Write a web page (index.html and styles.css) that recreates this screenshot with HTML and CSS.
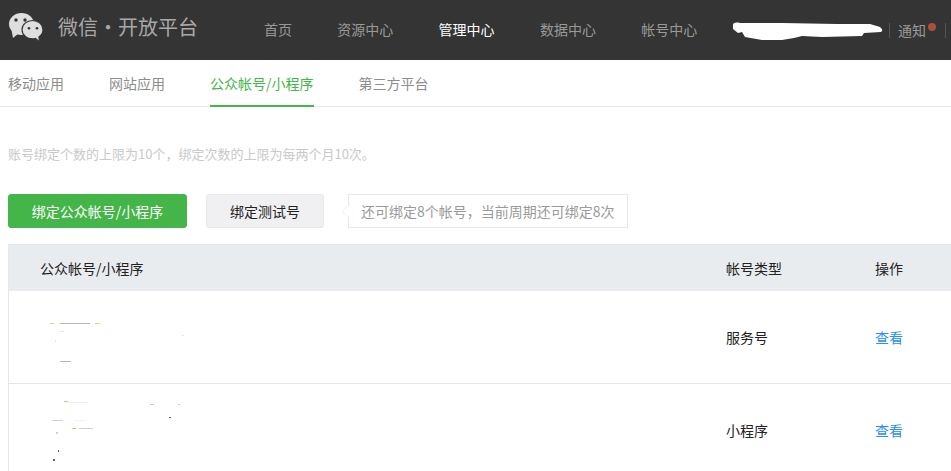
FILE: index.html
```html
<!DOCTYPE html>
<html lang="zh-CN">
<head>
<meta charset="utf-8">
<title>微信开放平台</title>
<link rel="stylesheet" href="styles.css">
</head>
<body>
<header class="topbar">
  <div class="brand">
    <svg class="logo" width="36" height="30" viewBox="0 0 36 30">
      <ellipse fill="#dedede" cx="13.500" cy="11" rx="12.500" ry="11"/>
      <path fill="#dedede" d="M3.500 17 5 25 11 20z"/>
      <path fill="#dedede" stroke="#343434" stroke-width="1.200" d="M24.500 7.500c-5.800 0-10.500 4-10.500 9.200s4.700 9.200 10.500 9.200c1.100 0 2.100-.2 3-.4l4 3.500-.6-5.100c2.500-1.700 4.100-4.300 4.100-7.200 0-5.200-4.700-9.200-10.500-9.200z"/>
      <circle fill="#343434" cx="8" cy="7" r="1.700"/><circle fill="#343434" cx="17" cy="7" r="1.700"/>
      <circle fill="#343434" cx="21" cy="15.300" r="1.300"/><circle fill="#343434" cx="29" cy="15.300" r="1.300"/>
    </svg>
    <span class="brand-name">微信<span class="brand-sep">·</span>开放平台</span>
  </div>
  <nav class="main-nav">
    <a class="nav-item">首页</a>
    <a class="nav-item">资源中心</a>
    <a class="nav-item nav-active">管理中心</a>
    <a class="nav-item">数据中心</a>
    <a class="nav-item">帐号中心</a>
  </nav>
  <div class="account">
    <svg class="scribble" width="152" height="21" viewBox="0 0 152 21">
      <path fill="#fff" d="M1 5C1 3 3 2 8 3L50 3 105 4 138 4 148 7Q152 10 149 12L132 13 130 16 90 17 70 16 62 18 50 20 30 20 13 17 10 12 6 13 1 9Z"/>
    </svg>
    <span class="notice">通知<i class="dot"></i></span>
  </div>
</header>

<nav class="tabs">
  <a class="tab">移动应用</a>
  <a class="tab">网站应用</a>
  <a class="tab tab-active">公众帐号/小程序</a>
  <a class="tab">第三方平台</a>
</nav>

<main class="content">
  <p class="limit">账号绑定个数的上限为10个，绑定次数的上限为每两个月10次。</p>
  <div class="actions">
    <a class="btn btn-primary">绑定公众帐号/小程序</a>
    <a class="btn btn-default">绑定测试号</a>
    <div class="tip">还可绑定8个帐号，当前周期还可绑定8次</div>
  </div>
  <div class="table">
    <div class="row row-head">
      <div class="col-name col-title">公众帐号/小程序</div>
      <div class="col-type">帐号类型</div>
      <div class="col-op">操作</div>
    </div>
    <div class="row row-body">
      <div class="col-name">
        <svg class="specks" width="200" height="92" viewBox="0 0 200 92">
          <g fill="#f2c99a"><rect x="41" y="32" width="4" height="1"/><rect x="86" y="32" width="5" height="1"/></g>
          <g fill="#b8b8b8"><rect x="51" y="32" width="30" height="1"/><rect x="51" y="70" width="11" height="1"/></g>
          <g fill="#e6e6e6"><rect x="51" y="40" width="4" height="1"/><rect x="46" y="49" width="1" height="2"/><rect x="173" y="44" width="2" height="1"/></g>
        </svg>
      </div>
      <div class="col-type">服务号</div>
      <div class="col-op"><a class="link">查看</a></div>
    </div>
    <div class="row row-body">
      <div class="col-name">
        <svg class="specks" width="200" height="92" viewBox="0 0 200 92">
          <g fill="#f2b878"><rect x="55" y="17" width="4" height="1"/><rect x="63" y="44" width="4" height="1"/></g>
          <g fill="#faefe0"><rect x="59" y="18" width="20" height="1"/><rect x="65" y="36" width="11" height="1"/></g>
          <g fill="#d0d0d0"><rect x="141" y="20" width="4" height="1"/><rect x="169" y="20" width="2" height="1"/><rect x="43" y="36" width="11" height="1"/><rect x="70" y="44" width="14" height="1"/><rect x="47" y="48" width="2" height="2"/></g>
          <g fill="#666"><rect x="160" y="33" width="2" height="1"/><rect x="49" y="66" width="1" height="2"/><rect x="44" y="75" width="2" height="2"/></g>
        </svg>
      </div>
      <div class="col-type">小程序</div>
      <div class="col-op"><a class="link">查看</a></div>
    </div>
  </div>
</main>
</body>
</html>
```
FILE: styles.css
```css
* { box-sizing: border-box; }
html, body { margin: 0; height: 471px; overflow: hidden; background: #fff; }
body { font-family: "Noto Sans CJK SC", "Liberation Sans", sans-serif; font-size: 14px; color: #222; }

.topbar { height: 60px; background: #343434; display: flex; align-items: center; }
.brand { width: 264px; display: flex; align-items: flex-start; padding-left: 8px; flex: none; height: 60px; padding-top: 13px; }
.logo { margin-right: 14px; flex: none; }
.brand-name { font-size: 20px; line-height: 28px; color: #a8a8a8; white-space: nowrap; display: flex; }
.brand-sep { width: 20px; text-align: center; }
.main-nav { display: flex; gap: 45.3px; width: 466px; flex: none; margin-top: -2px; }
.nav-item { font-size: 14px; color: #999; white-space: nowrap; }
.nav-active { color: #fff; }
.account { display: flex; align-items: center; padding-left: 2px; }
.scribble { flex: none; }
.notice { border-left: 1px solid #555; border-right: 1px solid #555; padding: 0 19px 0 8px; margin-left: 5px; color: #999; font-size: 14px; line-height: 15px; position: relative; }
.dot { position: absolute; right: 9px; top: 0; width: 8px; height: 8px; border-radius: 50%; background: #a9503f; }

.tabs { height: 47px; border-bottom: 1px solid #e7e7eb; display: flex; padding-left: 8px; gap: 45px; }
.tab { color: #8d8d8d; height: 47px; line-height: 47px; white-space: nowrap; }
.tab-active { color: #44b549; border-bottom: 2px solid #44b549; }

.content { padding: 0 0 0 8px; width: 1100px; }
.limit { margin: 38px 0 31px; font-size: 13px; line-height: 18px; color: #c9c9c9; }
.actions { display: flex; align-items: center; height: 34px; }
.btn { height: 34px; line-height: 32px; text-align: center; border-radius: 3px; font-size: 14px; border: 1px solid; }
.btn-primary { width: 179px; background: #44b549; border-color: #44b549; color: #fff; }
.btn-default { width: 118px; margin-left: 19px; background: #f0f0f2; border-color: #e7e7eb; color: #222; }
.tip { margin-left: 24px; height: 34px; width: 280px; line-height: 32px; border: 1px solid #e7e7eb; color: #9a9a9a; padding-left: 12px; white-space: nowrap; position: relative; }
.tip::before { content: ""; position: absolute; left: -7px; top: 11px; width: 10px; height: 10px; background: #fff; transform: rotate(45deg) scale(.75); border-left: 1px solid #eee; border-bottom: 1px solid #eee; }

.table { margin-top: 16px; border-left: 1px solid #e7e7eb; }
.row { display: flex; align-items: center; }
.row-head { height: 47px; background: #e9ecef; border-top: 1px solid #e4e7ea; color: #222; }
.row-body { height: 93px; border-bottom: 1px solid #e7e7eb; }
.col-name { width: 717px; flex: none; }
.col-title { padding-left: 31px; }
.col-type { width: 149px; flex: none; }
.col-op { flex: none; }
.link { color: #2b8ff0; }
.specks { display: block; }
```
